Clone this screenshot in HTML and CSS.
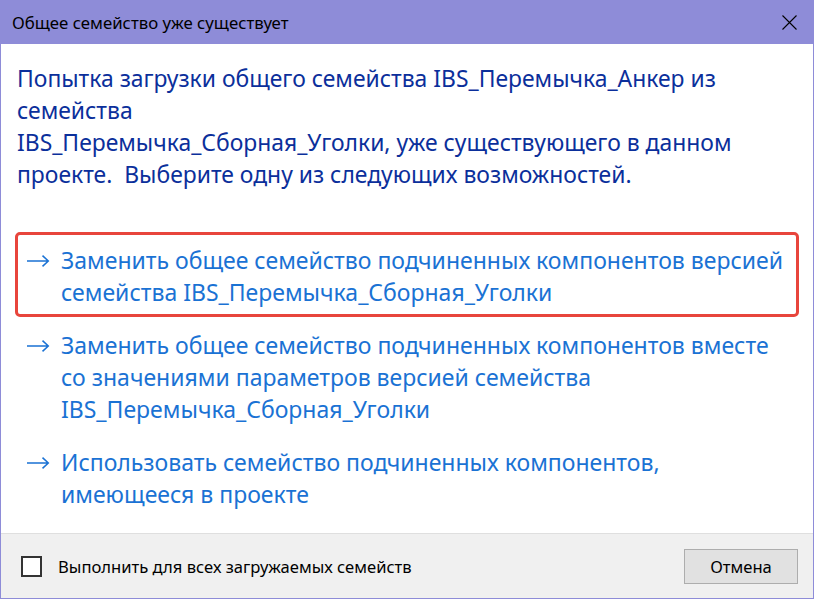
FILE: index.html
```html
<!DOCTYPE html>
<html lang="ru">
<head>
   <meta charset="UTF-8">
   <meta name="viewport" content="width=device-width">
   <title>Общее семейство уже существует</title>
   <link rel="stylesheet" href="styles.css">
</head>
<body>
   <div class="window">
       <div class="titlebar">
           <span class="title">Общее семейство уже существует</span>
           <svg class="close" width="15" height="15" viewBox="0 0 15 15">
               <path d="M0.5 0.5 L14.5 14.5 M14.5 0.5 L0.5 14.5" stroke="#000" stroke-width="1.1" fill="none"/>
           </svg>
       </div>

       <div class="content">
           <p class="instruction">Попытка загрузки общего семейства IBS_Перемычка_Анкер из<br>семейства<br>IBS_Перемычка_Сборная_Уголки, уже существующего в данном<br>проекте.&nbsp; Выберите одну из следующих возможностей.</p>

           <div class="links">
               <div class="cmd-link selected">
                   <svg class="arrow" width="24" height="12" viewBox="0 0 24 12">
                       <path d="M1 6 H22.5 M16.5 0.6 L22.3 6 L16.5 11.4" stroke="currentColor" stroke-width="1.5" fill="none"/>
                   </svg>
                   <span>Заменить общее семейство подчиненных компонентов версией<br>семейства IBS_Перемычка_Сборная_Уголки</span>
               </div>
               <div class="cmd-link">
                   <svg class="arrow" width="24" height="12" viewBox="0 0 24 12">
                       <path d="M1 6 H22.5 M16.5 0.6 L22.3 6 L16.5 11.4" stroke="currentColor" stroke-width="1.5" fill="none"/>
                   </svg>
                   <span>Заменить общее семейство подчиненных компонентов вместе<br>со значениями параметров версией семейства<br>IBS_Перемычка_Сборная_Уголки</span>
               </div>
               <div class="cmd-link">
                   <svg class="arrow" width="24" height="12" viewBox="0 0 24 12">
                       <path d="M1 6 H22.5 M16.5 0.6 L22.3 6 L16.5 11.4" stroke="currentColor" stroke-width="1.5" fill="none"/>
                   </svg>
                   <span>Использовать семейство подчиненных компонентов,<br>имеющееся в проекте</span>
               </div>
           </div>
       </div>

       <div class="footer">
           <label class="check">
               <span class="box"></span>
               Выполнить для всех загружаемых семейств
           </label>
           <button class="btn">Отмена</button>
       </div>
   </div>
</body>
</html>
```

FILE: styles.css
```css
html, body {
    margin: 0;
    padding: 0;
}
body {
    font-family: "Noto Sans", "Open Sans", sans-serif;
    background-color: #ffffff;
}
.window {
    height: 599px;
    box-sizing: border-box;
    border: 1px solid #8e8cd8;
    border-top: none;
    display: flex;
    flex-direction: column;
}
.titlebar {
    height: 44px;
    flex-shrink: 0;
    background-color: #8e8cd8;
    display: flex;
    align-items: center;
    justify-content: space-between;
    padding: 0 16px 0 11px;
}
.title {
    font-size: 16.8px;
    color: #000;
    margin-top: 1px;
}
.close { display: block; margin-top: 1px; }
.content {
    flex: 1;
    padding: 19px 14px 0 14px;
}
.instruction {
    margin: 0 0 41px 2px;
    font-size: 22.9px;
    line-height: 32px;
    color: #0b2f9b;
    white-space: nowrap;
}
.cmd-link {
    display: flex;
    align-items: flex-start;
    gap: 11px;
    border: 3px solid transparent;
    border-radius: 5px;
    padding: 9px 8px 6px 8px;
    font-size: 23px;
    line-height: 32px;
    color: #1a72d4;
    white-space: nowrap;
}
.cmd-link.selected { border-color: #e8453c; }
.arrow {
    flex-shrink: 0;
    margin-top: 11px;
}
.footer {
    height: 65px;
    flex-shrink: 0;
    box-sizing: border-box;
    background-color: #f0f0f0;
    border-top: 1px solid #dfdfdf;
    display: flex;
    align-items: center;
    justify-content: space-between;
    padding: 1px 15px 0 20px;
}
.check {
    display: flex;
    align-items: center;
    gap: 16px;
    font-size: 16.6px;
    color: #000;
}
.box {
    width: 17px;
    height: 17px;
    border: 2px solid #333;
    background: #fff;
    display: inline-block;
}
.btn {
    width: 114px;
    height: 35px;
    background-color: #e1e1e1;
    border: 1px solid #adadad;
    font-family: inherit;
    font-size: 16.6px;
    color: #000;
    padding: 0;
}
```
